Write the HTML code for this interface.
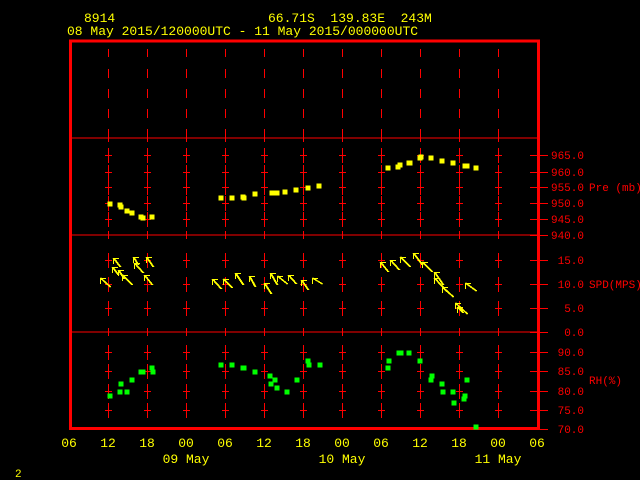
<!DOCTYPE html>
<html><head><meta charset="utf-8">
<style>
html,body{margin:0;padding:0;background:#000;width:640px;height:480px;overflow:hidden}
svg{display:block}
.y{fill:#ffff00;font-family:"Liberation Mono",monospace;font-size:13px}
.r{fill:#ff0000;font-family:"Liberation Mono",monospace;font-size:11px}
</style></head><body>
<svg id="s" width="640" height="480" xmlns="http://www.w3.org/2000/svg" shape-rendering="crispEdges">
<rect width="640" height="480" fill="#000"/>
<g id="grid" stroke="#ff0000" stroke-width="1"></g>
<g fill="none" stroke="#ff0000">
<line x1="70" y1="138" x2="539" y2="138"/>
<line x1="70" y1="235" x2="539" y2="235"/>
<line x1="70" y1="332" x2="539" y2="332"/>
<rect x="70.5" y="41" width="468" height="387.5" stroke-width="3"/>
</g>
<g id="data"></g>
<text class="y" x="84" y="22">8914</text>
<text class="y" x="268" y="22" xml:space="preserve">66.71S  139.83E  243M</text>
<text class="y" x="67" y="35">08 May 2015/120000UTC - 11 May 2015/000000UTC</text>
<g class="r" text-anchor="end">
<text x="584" y="159">965.0</text><text x="584" y="176">960.0</text><text x="584" y="191">955.0</text>
<text x="584" y="207">950.0</text><text x="584" y="223">945.0</text><text x="584" y="239">940.0</text>
<text x="584" y="264">15.0</text><text x="584" y="288">10.0</text><text x="584" y="312">5.0</text><text x="584" y="336">0.0</text>
<text x="584" y="356">90.0</text><text x="584" y="375">85.0</text><text x="584" y="395">80.0</text>
<text x="584" y="414">75.0</text><text x="584" y="433">70.0</text>
</g>
<g class="r"><text x="589" y="191">Pre (mb)</text><text x="589" y="288">SPD(MPS)</text><text x="589" y="384">RH(%)</text></g>
<g class="y" text-anchor="middle">
<text x="69" y="447">06</text><text x="108" y="447">12</text><text x="147" y="447">18</text><text x="186" y="447">00</text>
<text x="225" y="447">06</text><text x="264" y="447">12</text><text x="303" y="447">18</text><text x="342" y="447">00</text>
<text x="381" y="447">06</text><text x="420" y="447">12</text><text x="459" y="447">18</text><text x="498" y="447">00</text>
<text x="537" y="447">06</text>
<text x="186" y="463">09 May</text><text x="342" y="463">10 May</text><text x="498" y="463">11 May</text>
</g>
<text class="y" x="15" y="477" style="font-size:11px">2</text>
</svg>
<script>
var NS="http://www.w3.org/2000/svg",g=document.getElementById("grid"),d=document.getElementById("data");
function L(p,x1,y1,x2,y2,c){var l=document.createElementNS(NS,"line");l.setAttribute("x1",x1);l.setAttribute("y1",y1);l.setAttribute("x2",x2);l.setAttribute("y2",y2);if(c)l.setAttribute("stroke",c);p.appendChild(l);}
function R(x,y,c){var r=document.createElementNS(NS,"rect");r.setAttribute("x",x-2.5);r.setAttribute("y",y-2.5);r.setAttribute("width",5);r.setAttribute("height",5);r.setAttribute("fill",c);d.appendChild(r);}
var ys=[155,172,187,203,219,260,284,308,352,371,391,410];
for(var i=1;i<=11;i++){var x=69+39*i;
 [[49,57],[69,78],[89,98],[109,118],[129,137]].forEach(function(s){L(g,x+.5,s[0],x+.5,s[1]);});
 L(g,x+.5,134,x+.5,142);L(g,x+.5,231,x+.5,239);L(g,x+.5,328,x+.5,336);
 ys.forEach(function(y){L(g,x-3,y+.5,x+4,y+.5);L(g,x+.5,y-7,x+.5,y+8);});}
[155,172,187,203,219,235,260,284,308,332,352,371,391,410,429].forEach(function(y){L(g,530,y+.5,548,y+.5);});
var P=[[110,204],[120,205],[121,207],[127,211],[132,213],[141,217],[143,218],[152,217],[221,198],[232,198],[243,197],[244,198],[255,194],[272,193],[277,193],[285,192],[296,190],[308,188],[319,186],[388,168],[398,167],[400,165],[409,163],[410,163],[420,158],[421,157],[431,158],[442,161],[453,163],[465,166],[467,166],[476,168]];
P.forEach(function(p){R(p[0],p[1],"#ffff00");});
var H=[[110,396],[120,392],[121,384],[127,392],[132,380],[141,372],[143,372],[152,368],[153,372],[221,365],[232,365],[243,368],[244,368],[255,372],[270,376],[271,384],[275,380],[277,388],[287,392],[297,380],[308,361],[309,365],[320,365],[389,361],[388,368],[399,353],[401,353],[409,353],[420,361],[432,376],[431,380],[442,384],[443,392],[453,392],[454,403],[465,396],[464,399],[467,380],[476,427]];
H.forEach(function(p){R(p[0],p[1],"#00ff00");});
var W=[[100,278,110,287],[113,258,120,267],[112,267,118,275],[118,270,124,279],[122,275,132,285],[133,257,138,265],[134,263,143,273],[146,257,153,267],[144,275,152,285],
[212,279,221,289],[223,279,232,288],[235,273,243,285],[249,276,255,287],[264,283,271,294],[270,273,277,285],[277,276,287,284],[288,275,296,284],[301,280,308,290],[312,278,322,284],
[380,262,388,272],[390,260,399,270],[400,257,410,267],[413,253,422,265],[422,262,432,272],[434,272,443,285],[434,278,447,292],[442,287,453,297],[455,303,467,314],[457,307,463,313],[465,283,476,291]];
var wg=document.createElementNS(NS,"g");wg.setAttribute("stroke","#ffff00");wg.setAttribute("fill","none");d.appendChild(wg);
W.forEach(function(w){L(wg,w[2],w[3],w[0],w[1]);L(wg,w[2]+1,w[3],w[0]+1,w[1]);L(wg,w[0],w[1]+.5,w[0]+6,w[1]+.5);L(wg,w[0]+.5,w[1],w[0]+.5,w[1]+6);});
</script>
</body></html>
